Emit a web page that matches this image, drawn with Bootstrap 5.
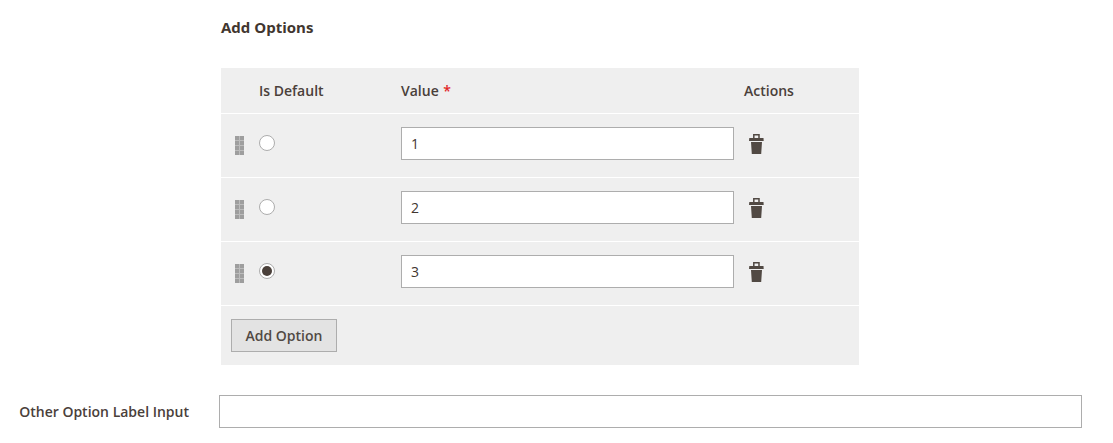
<!doctype html>
<html lang="en"><head><meta charset="utf-8">
<title>Add Options</title>
<link rel="stylesheet" href="https://cdn.jsdelivr.net/npm/bootstrap@5.3.0/dist/css/bootstrap.min.css">
<style>
html,body{margin:0;background:#fff;overflow:hidden}
body{font-family:"Open Sans",sans-serif;font-size:14px;color:#41362f;height:443px}
.pg{padding-top:17px}
.head{margin:0 0 0 221px;font-size:15px;font-weight:700;line-height:20px;height:51px;color:#41362f}
.opts{width:638px;margin-left:221px;background:#efefef}
.hrow{height:46px;border-bottom:1px solid #fff;font-weight:600;line-height:20px;padding-top:13px;color:#4a403a}
.orow{height:64px;border-bottom:1px solid #fff;padding-top:13px}
.c1{width:180px;padding-left:38px;flex:none}
.c2{width:343px;flex:none}
.c1b{width:180px;padding:8px 0 0 14px;flex:none;gap:15px}
.req{color:#e22626;margin-left:1px}
.valin{width:333px;height:33px;border:1px solid #adadad;background:#fff;padding:0 9px;font:14px "Open Sans",sans-serif;color:#41362f;border-radius:0;outline:0;display:block}
.grip{display:grid;grid-template-columns:repeat(2,4px);grid-auto-rows:4px;gap:1px;width:9px;margin-top:1px;background:#bcbcbc}
.grip i{display:block;background:#9e9e9e}
.rad{width:16px;height:16px;border-radius:50%;border:1px solid #adadad;background:#fff;display:block;position:relative}
.rad.on::after{content:"";position:absolute;inset:2px;border-radius:50%;background:#4a403a}
.trash{margin:7px 0 0 5px;display:block}
.foot{height:59px;padding:13px 0 0 10px}
.addbtn{width:106px;height:33px;background:#e3e3e3;border:1px solid #adadad;border-radius:0;padding:0;font:600 14px/1 "Open Sans",sans-serif;color:#514943}
.other{margin-top:30px;height:33px}
.lab{width:219px;padding-right:30px;text-align:right;font-weight:600;color:#4a403a;flex:none}
.otherin{width:863px;height:33px;border:1px solid #adadad;background:#fff;border-radius:0;outline:0;display:block;padding:0 10px}
</style></head>
<body>
<div class="pg">
<h2 class="head">Add Options</h2>
<div class="opts">
<div class="hrow d-flex"><div class="c1">Is Default</div><div class="c2">Value <span class="req">*</span></div><div>Actions</div></div>
<div class="orow d-flex align-items-start">
<div class="c1b d-flex align-items-start"><span class="grip"><i></i><i></i><i></i><i></i><i></i><i></i><i></i><i></i></span><span class="rad"></span></div>
<div class="c2"><input class="valin" value="1"></div>
<svg class="trash" width="15" height="20" viewBox="0 0 15 20"><path fill="#514943" d="M.3 4h14.2l.2 3H0zM2 8h11l-.8 12H2.8z"/><path fill="none" stroke="#514943" stroke-width="1.5" d="M4.8 4V.8h5.2V4"/></svg>
</div>
<div class="orow d-flex align-items-start">
<div class="c1b d-flex align-items-start"><span class="grip"><i></i><i></i><i></i><i></i><i></i><i></i><i></i><i></i></span><span class="rad"></span></div>
<div class="c2"><input class="valin" value="2"></div>
<svg class="trash" width="15" height="20" viewBox="0 0 15 20"><path fill="#514943" d="M.3 4h14.2l.2 3H0zM2 8h11l-.8 12H2.8z"/><path fill="none" stroke="#514943" stroke-width="1.5" d="M4.8 4V.8h5.2V4"/></svg>
</div>
<div class="orow d-flex align-items-start">
<div class="c1b d-flex align-items-start"><span class="grip"><i></i><i></i><i></i><i></i><i></i><i></i><i></i><i></i></span><span class="rad on"></span></div>
<div class="c2"><input class="valin" value="3"></div>
<svg class="trash" width="15" height="20" viewBox="0 0 15 20"><path fill="#514943" d="M.3 4h14.2l.2 3H0zM2 8h11l-.8 12H2.8z"/><path fill="none" stroke="#514943" stroke-width="1.5" d="M4.8 4V.8h5.2V4"/></svg>
</div>
<div class="foot"><button type="button" class="btn addbtn">Add Option</button></div>
</div>
<div class="other d-flex align-items-center"><div class="lab">Other Option Label Input</div><input class="otherin"></div>
</div>
</body></html>
